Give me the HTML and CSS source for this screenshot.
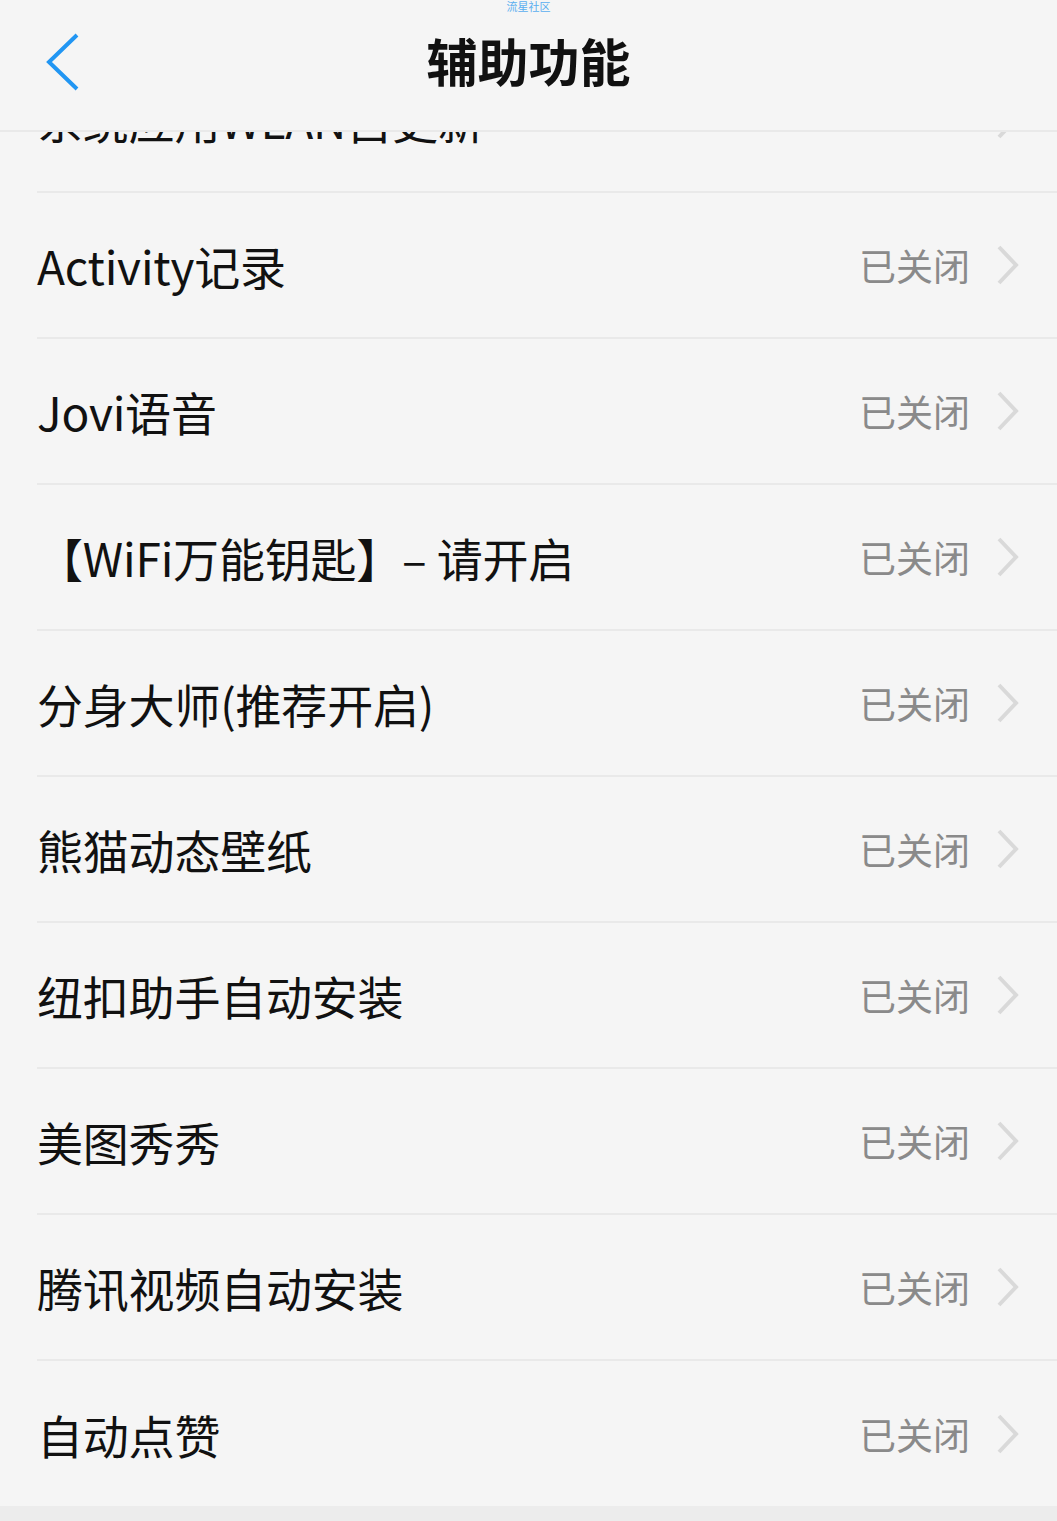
FILE: index.html
```html
<!DOCTYPE html>
<html>
<head>
    <meta charset="utf-8">
    <title>辅助功能</title>
    <link rel="stylesheet" href="styles.css">
</head>
<body>
    <div id="page">
        <div id="header">
            <div class="watermark">流星社区</div>
            <svg class="back" width="40" height="60" viewBox="0 0 40 60">
                <polyline points="32,2 4,29 32,56" fill="none" stroke="#2196f3" stroke-width="4"/>
            </svg>
            <h1>辅助功能</h1>
        </div>

        <div id="list">
            <div class="row first">
                <span class="label">系统应用WLAN自更新</span>
                <span class="right">
                    <svg class="chev" width="24" height="40" viewBox="0 0 24 40"><polyline points="3,2 20,20 3,38" fill="none" stroke="#d9d9d9" stroke-width="4"/></svg>
                </span>
            </div>
            <div class="row">
                <span class="label">Activity记录</span>
                <span class="right"><span class="state">已关闭</span>
                    <svg class="chev" width="24" height="40" viewBox="0 0 24 40"><polyline points="3,2 20,20 3,38" fill="none" stroke="#d9d9d9" stroke-width="4"/></svg>
                </span>
            </div>
            <div class="row">
                <span class="label">Jovi语音</span>
                <span class="right"><span class="state">已关闭</span>
                    <svg class="chev" width="24" height="40" viewBox="0 0 24 40"><polyline points="3,2 20,20 3,38" fill="none" stroke="#d9d9d9" stroke-width="4"/></svg>
                </span>
            </div>
            <div class="row">
                <span class="label">【WiFi万能钥匙】– 请开启</span>
                <span class="right"><span class="state">已关闭</span>
                    <svg class="chev" width="24" height="40" viewBox="0 0 24 40"><polyline points="3,2 20,20 3,38" fill="none" stroke="#d9d9d9" stroke-width="4"/></svg>
                </span>
            </div>
            <div class="row">
                <span class="label">分身大师(推荐开启)</span>
                <span class="right"><span class="state">已关闭</span>
                    <svg class="chev" width="24" height="40" viewBox="0 0 24 40"><polyline points="3,2 20,20 3,38" fill="none" stroke="#d9d9d9" stroke-width="4"/></svg>
                </span>
            </div>
            <div class="row">
                <span class="label">熊猫动态壁纸</span>
                <span class="right"><span class="state">已关闭</span>
                    <svg class="chev" width="24" height="40" viewBox="0 0 24 40"><polyline points="3,2 20,20 3,38" fill="none" stroke="#d9d9d9" stroke-width="4"/></svg>
                </span>
            </div>
            <div class="row">
                <span class="label">纽扣助手自动安装</span>
                <span class="right"><span class="state">已关闭</span>
                    <svg class="chev" width="24" height="40" viewBox="0 0 24 40"><polyline points="3,2 20,20 3,38" fill="none" stroke="#d9d9d9" stroke-width="4"/></svg>
                </span>
            </div>
            <div class="row">
                <span class="label">美图秀秀</span>
                <span class="right"><span class="state">已关闭</span>
                    <svg class="chev" width="24" height="40" viewBox="0 0 24 40"><polyline points="3,2 20,20 3,38" fill="none" stroke="#d9d9d9" stroke-width="4"/></svg>
                </span>
            </div>
            <div class="row">
                <span class="label">腾讯视频自动安装</span>
                <span class="right"><span class="state">已关闭</span>
                    <svg class="chev" width="24" height="40" viewBox="0 0 24 40"><polyline points="3,2 20,20 3,38" fill="none" stroke="#d9d9d9" stroke-width="4"/></svg>
                </span>
            </div>
            <div class="row last">
                <span class="label">自动点赞</span>
                <span class="right"><span class="state">已关闭</span>
                    <svg class="chev" width="24" height="40" viewBox="0 0 24 40"><polyline points="3,2 20,20 3,38" fill="none" stroke="#d9d9d9" stroke-width="4"/></svg>
                </span>
            </div>
        </div>

        <div id="footer"></div>
    </div>
</body>
</html>
```

FILE: styles.css
```css
html, body {
    margin: 0;
    padding: 0;
}

body {
    background: #f5f5f5;
    font-family: "Noto Sans CJK SC", "Noto Sans", sans-serif;
    color: #111;
}

#page {
    width: 1057px;
    height: 1521px;
    overflow: hidden;
    display: flex;
    flex-direction: column;
}

#header {
    position: relative;
    height: 130px;
    flex-shrink: 0;
    border-bottom: 2px solid #e9e9e9;
    background: #f5f5f5;
    display: flex;
    align-items: center;
    justify-content: center;
    z-index: 2;
}

#header h1 {
    margin: 0 0 10px 0;
    font-size: 51px;
    font-weight: bold;
    line-height: 1;
    color: #111;
}

.watermark {
    position: absolute;
    top: 0;
    left: 0;
    right: 0;
    text-align: center;
    font-size: 11px;
    color: #5aaef0;
    line-height: 13px;
}

.back {
    position: absolute;
    left: 45px;
    top: 33px;
}

#list {
    overflow: hidden;
    flex-shrink: 0;
    height: 1374px;
}

.row {
    height: 144px;
    margin-left: 37px;
    padding-right: 37px;
    border-bottom: 2px solid #e9e9e9;
    display: flex;
    align-items: center;
    justify-content: space-between;
}

.row.first {
    margin-top: -85px;
}

.row.last {
    border-bottom: none;
    height: 146px;
}

.label {
    font-size: 46px;
    line-height: 1;
    color: #111;
    letter-spacing: -0.2px;
}

.right {
    display: flex;
    align-items: center;
    gap: 26px;
}

.state {
    font-size: 37px;
    color: #8a8a8a;
    line-height: 1;
}

.chev {
    display: block;
}

#footer {
    flex: 1;
    background: #ececec;
}
```
